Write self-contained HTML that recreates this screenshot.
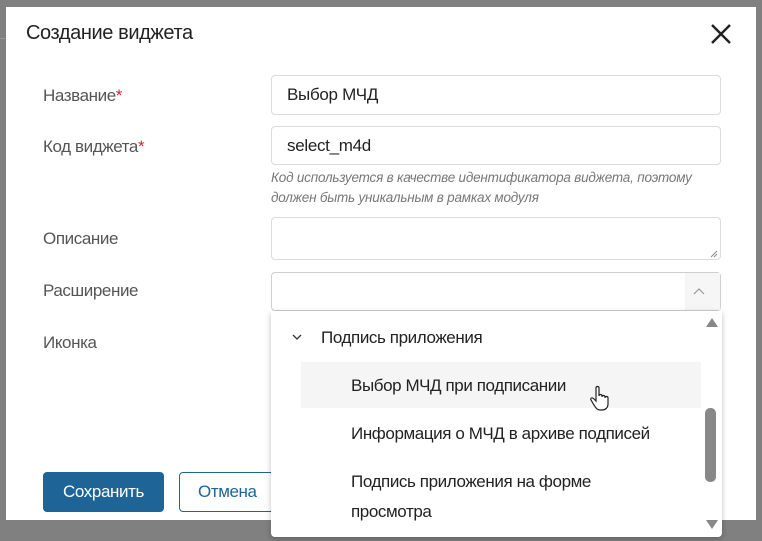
<!DOCTYPE html>
<html><head><meta charset="utf-8"><style>
*{box-sizing:border-box;margin:0;padding:0}
body{width:762px;height:541px;background:#808080;position:relative;overflow:hidden;font-family:"Liberation Sans","Noto Sans CJK SC",sans-serif;color:#333}
.modal{position:absolute;left:6px;top:7px;width:750px;height:513px;background:#fff}
.abs{position:absolute}
.title{left:26px;top:22px;font-size:20px;color:#222;letter-spacing:-0.4px}
.lbl{left:43px;font-size:17px;color:#555;letter-spacing:-0.4px}
.lbl b{color:#d0262b;font-weight:normal}
.inp{left:271px;width:450px;border:1px solid #dcdcdc;border-radius:4px;background:#fff;font-size:17px;color:#222;padding-left:15px;letter-spacing:-0.3px}
.hint{left:271px;font-size:13.5px;font-style:italic;color:#777;letter-spacing:-0.2px;line-height:20px}
.dd{left:271px;top:311px;width:451px;height:226px;background:#fff;border-radius:0 0 4px 4px;box-shadow:0 2px 6px rgba(0,0,0,.25)}
.it{font-size:17px;color:#222;letter-spacing:-0.4px}
</style></head><body>
<div class="abs" style="left:0;top:38px;width:6px;height:1px;background:#999"></div>
<div class="modal"></div>
<div class="abs title">Создание виджета</div>
<svg class="abs" style="left:710px;top:23px" width="22" height="22" viewBox="0 0 22 22"><path d="M2 2L20 20M20 2L2 20" stroke="#222" stroke-width="2.4"/></svg>

<div class="abs lbl" style="top:86px">Название<b>*</b></div>
<div class="abs inp" style="top:75px;height:40px;line-height:38px">Выбор МЧД</div>
<div class="abs lbl" style="top:137px">Код виджета<b>*</b></div>
<div class="abs inp" style="top:126px;height:39px;line-height:37px">select_m4d</div>
<div class="abs hint" style="top:168px">Код используется в качестве идентификатора виджета, поэтому<br>должен быть уникальным в рамках модуля</div>
<div class="abs lbl" style="top:229px">Описание</div>
<div class="abs inp" style="top:217px;height:43px"></div>
<svg class="abs" style="left:710px;top:250px" width="8" height="8"><path d="M1 7L7 1M4 7L7 4" stroke="#888" stroke-width="1"/></svg>
<div class="abs lbl" style="top:281px">Расширение</div>
<div class="abs inp" style="top:272px;height:39px;border-color:#cfcfcf"></div>
<div class="abs" style="left:685px;top:273px;width:35px;height:37px;background:#f6f6f6"></div>
<svg class="abs" style="left:693px;top:288px" width="12" height="8"><path d="M1 6L6 1L11 6" stroke="#999" stroke-width="1.2" fill="none"/></svg>
<div class="abs lbl" style="top:333px">Иконка</div>

<div class="abs" style="left:43px;top:472px;width:121px;height:40px;background:#1e6496;border-radius:4px;color:#fff;font-size:17px;line-height:40px;text-align:center;letter-spacing:-0.4px">Сохранить</div>
<div class="abs" style="left:179px;top:472px;width:100px;height:40px;border:1px solid #1e6496;border-radius:4px;color:#1e6496;font-size:17px;line-height:38px;padding-left:18px;letter-spacing:-0.4px">Отмена</div>

<div class="abs dd"></div>
<svg class="abs" style="left:292px;top:334px" width="10" height="7"><path d="M1 1L5 5L9 1" stroke="#333" stroke-width="1.3" fill="none"/></svg>
<div class="abs it" style="left:321px;top:328px">Подпись приложения</div>
<div class="abs" style="left:301px;top:362px;width:400px;height:46px;background:#f5f5f5"></div>
<div class="abs it" style="left:351px;top:376px">Выбор МЧД при подписании</div>
<div class="abs it" style="left:351px;top:424px">Информация о МЧД в архиве подписей</div>
<div class="abs it" style="left:351px;top:467px;line-height:30px">Подпись приложения на форме<br>просмотра</div>
<svg class="abs" style="left:705px;top:316px" width="14" height="12"><path d="M1 11L7 2L13 11Z" fill="#888"/></svg>
<div class="abs" style="left:705px;top:408px;width:11px;height:74px;background:#888;border-radius:5px"></div>
<svg class="abs" style="left:705px;top:519px" width="14" height="12"><path d="M1 1L7 10L13 1Z" fill="#888"/></svg>
<svg class="abs" style="left:590px;top:385px" width="20" height="26" viewBox="0 0 20 26"><path d="M6 3c0-2 3-2 3 0v8c0-2 3-2 3 0v1c0-2 3-2 3 0v1c0-2 3-2 3 0v6c0 4-3 6-6 6h-2c-3 0-4-2-6-5l-3-5c-1-2 1-3 3-1l2 2z" fill="#fff" stroke="#222" stroke-width="1.2"/></svg>
</body></html>
